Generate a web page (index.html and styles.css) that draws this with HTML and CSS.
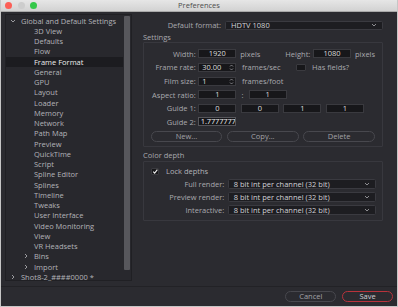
FILE: index.html
```html
<!DOCTYPE html>
<html lang="en">
<head>
    <meta charset="UTF-8">
    <meta name="viewport" content="width=device-width, initial-scale=1.0">
    <title>Preferences</title>
    <link rel="stylesheet" href="styles.css">
</head>
<body>
<div class="window">
    <div class="titlebar">
        <div class="lights">
            <span class="light red"></span>
            <span class="light gray"></span>
            <span class="light green"></span>
        </div>
        <div class="title">Preferences</div>
    </div>

    <div class="main">
        <div class="tree">
            <ul class="tree-list">
                <li class="row lvl0"><svg class="chev" viewBox="0 0 6 6"><polyline points="1,2 3,4 5,2"/></svg>Global and Default Settings</li>
                <li class="row lvl2">3D View</li>
                <li class="row lvl2">Defaults</li>
                <li class="row lvl2">Flow</li>
                <li class="row lvl2 selected">Frame Format</li>
                <li class="row lvl2">General</li>
                <li class="row lvl2">GPU</li>
                <li class="row lvl2">Layout</li>
                <li class="row lvl2">Loader</li>
                <li class="row lvl2">Memory</li>
                <li class="row lvl2">Network</li>
                <li class="row lvl2">Path Map</li>
                <li class="row lvl2">Preview</li>
                <li class="row lvl2">QuickTime</li>
                <li class="row lvl2">Script</li>
                <li class="row lvl2">Spline Editor</li>
                <li class="row lvl2">Splines</li>
                <li class="row lvl2">Timeline</li>
                <li class="row lvl2">Tweaks</li>
                <li class="row lvl2">User Interface</li>
                <li class="row lvl2">Video Monitoring</li>
                <li class="row lvl2">View</li>
                <li class="row lvl2">VR Headsets</li>
                <li class="row lvl1"><svg class="chev" viewBox="0 0 6 6"><polyline points="2,1 4,3 2,5"/></svg>Bins</li>
                <li class="row lvl1"><svg class="chev" viewBox="0 0 6 6"><polyline points="2,1 4,3 2,5"/></svg>Import</li>
                <li class="row lvl0"><svg class="chev" viewBox="0 0 6 6"><polyline points="2,1 4,3 2,5"/></svg>Shot8-2_####0000 *</li>
            </ul>
            <div class="scrollbar"><div class="thumb"></div></div>
        </div>

        <div class="panel">
            <div class="format-row">
                <span class="format-label">Default format:</span>
                <div class="select">
                    <span>HDTV 1080</span>
                    <svg class="drop" viewBox="0 0 6 4"><polyline points="1,1 3,3 5,1"/></svg>
                </div>
            </div>

            <div class="group-title">Settings</div>
            <div class="group settings">
                <div class="form-row">
                    <span class="label">Width:</span>
                    <span class="field center">1920</span>
                    <span class="unit short">pixels</span>
                    <span class="label-mid">Height:</span>
                    <span class="field center">1080</span>
                    <span class="unit">pixels</span>
                </div>
                <div class="form-row">
                    <span class="label">Frame rate:</span>
                    <span class="field spin">30.00<svg class="arrows" viewBox="0 0 5 7"><polyline points="1,2.5 2.5,1 4,2.5"/><polyline points="1,4.5 2.5,6 4,4.5"/></svg></span>
                    <span class="unit wide">frames/sec</span>
                    <span class="check"></span>
                    <span class="check-label">Has fields?</span>
                </div>
                <div class="form-row">
                    <span class="label">Film size:</span>
                    <span class="field spin">1<svg class="arrows" viewBox="0 0 5 7"><polyline points="1,2.5 2.5,1 4,2.5"/><polyline points="1,4.5 2.5,6 4,4.5"/></svg></span>
                    <span class="unit wide">frames/foot</span>
                </div>
                <div class="form-row">
                    <span class="label">Aspect ratio:</span>
                    <span class="field center">1</span>
                    <span class="colon">:</span>
                    <span class="field center">1</span>
                </div>
                <div class="form-row">
                    <span class="label">Guide 1:</span>
                    <div class="fields">
                        <span class="field center">0</span>
                        <span class="field center">0</span>
                        <span class="field center">1</span>
                        <span class="field center">1</span>
                    </div>
                </div>
                <div class="form-row">
                    <span class="label">Guide 2:</span>
                    <span class="field left active">1.7777777</span>
                </div>
                <div class="buttons">
                    <button class="pill">New...</button>
                    <button class="pill">Copy...</button>
                    <button class="pill">Delete</button>
                </div>
            </div>

            <div class="group-title">Color depth</div>
            <div class="group depth">
                <div class="lock-row">
                    <span class="check checked"><svg viewBox="0 0 8 8"><polyline points="1.5,4.2 3.2,6 6.5,1.8"/></svg></span>
                    <span>Lock depths</span>
                </div>
                <div class="depth-row">
                    <span class="depth-label">Full render:</span>
                    <div class="select">
                        <span>8 bit int per channel (32 bit)</span>
                        <svg class="drop" viewBox="0 0 6 4"><polyline points="1,1 3,3 5,1"/></svg>
                    </div>
                </div>
                <div class="depth-row">
                    <span class="depth-label">Preview render:</span>
                    <div class="select">
                        <span>8 bit int per channel (32 bit)</span>
                        <svg class="drop" viewBox="0 0 6 4"><polyline points="1,1 3,3 5,1"/></svg>
                    </div>
                </div>
                <div class="depth-row">
                    <span class="depth-label">Interactive:</span>
                    <div class="select">
                        <span>8 bit int per channel (32 bit)</span>
                        <svg class="drop" viewBox="0 0 6 4"><polyline points="1,1 3,3 5,1"/></svg>
                    </div>
                </div>
            </div>
        </div>
    </div>

    <div class="footer">
        <button class="pill action">Cancel</button>
        <button class="pill action save">Save</button>
    </div>
</div>
</body>
</html>
```

FILE: styles.css
```css
* {
    box-sizing: border-box;
}

body {
    margin: 0;
    width: 398px;
    height: 307px;
    overflow: hidden;
    font-family: "Open Sans", "Noto Sans", sans-serif;
    font-size: 7.5px;
    background: #2b2b30;
}

.window {
    height: 307px;
    display: flex;
    flex-direction: column;
    background: #2b2b30;
    border: 1px solid #c6c6c6;
    border-top: none;
}

/* title bar */
.titlebar {
    height: 12px;
    flex: none;
    position: relative;
    display: flex;
    align-items: center;
    justify-content: center;
    background: linear-gradient(#e6e6e6, #d2d2d2);
    border-bottom: 1px solid #a9a9a9;
}

.lights {
    position: absolute;
    left: 4px;
    top: 2px;
    display: flex;
    gap: 5.6px;
}

.light {
    width: 7px;
    height: 7px;
    border-radius: 50%;
}

.light.red { background: #fc5f57; }
.light.gray { background: #cdcdcd; }
.light.green { background: #34c84a; }

.title {
    color: #4d4d4d;
    font-size: 7.5px;
    line-height: 11px;
}

/* content */
.main {
    flex: 1;
    display: flex;
    min-height: 0;
}

.tree {
    width: 127px;
    height: 267px;
    margin: 2px 0 0 4px;
    border: 1px solid #202024;
    background: #28282d;
    display: flex;
}

.tree-list {
    list-style: none;
    margin: 0;
    padding: 0.6px 0 0;
    width: 117px;
}

.row {
    height: 10.25px;
    line-height: 10.25px;
    color: #b3b3b8;
    white-space: nowrap;
    display: flex;
    align-items: center;
}

.row.selected {
    background: #1c1c20;
    color: #ececec;
}

.lvl0 { padding-left: 4px; }
.lvl1 { padding-left: 17px; }
.lvl2 { padding-left: 28px; }

.chev {
    width: 6px;
    height: 6px;
    margin-right: 5px;
    fill: none;
    stroke: #a8a8ad;
    stroke-width: 0.9;
}

.scrollbar {
    flex: 1;
    padding: 1px 1px 0 1px;
}

.thumb {
    width: 6px;
    height: 254px;
    background: #57575c;
    border-radius: 1px;
}

.panel {
    flex: 1;
    padding: 8.7px 14px 0 11px;
    color: #a9a9ae;
}

.format-row {
    display: flex;
    align-items: center;
    height: 9px;
    gap: 4px;
}

.format-label {
    width: 78px;
    text-align: right;
}

.select {
    flex: 1;
    height: 100%;
    display: flex;
    align-items: center;
    justify-content: space-between;
    padding: 0 5px;
    background: #1d1d21;
    border: 1px solid #3a3a40;
    border-radius: 1.5px;
    color: #d2d2d6;
}

.drop {
    width: 6px;
    height: 4px;
    fill: none;
    stroke: #a9a9ae;
    stroke-width: 0.8;
}

.group-title {
    height: 9px;
    line-height: 9px;
    margin-top: 3.5px;
    color: #a9a9ae;
}

.group {
    border: 1px solid #38383e;
    border-radius: 1px;
}

.settings {
    display: flex;
    flex-direction: column;
    gap: 4.6px;
    padding: 6.2px 0 5px;
    height: 105px;
}

.form-row {
    display: flex;
    align-items: center;
    height: 9px;
}

.label {
    width: 51.7px;
    margin-right: 2.6px;
    text-align: right;
    white-space: nowrap;
}

.field {
    width: 38px;
    height: 9px;
    line-height: 7px;
    background: #17171a;
    border: 1px solid #3a3a3f;
    color: #dcdcdc;
    overflow: hidden;
    white-space: nowrap;
}

.field.center { text-align: center; }

.field.spin,
.field.left {
    padding-left: 3px;
    display: flex;
    align-items: center;
    justify-content: space-between;
}

.field.active {
    padding-left: 1.5px;
    letter-spacing: -0.15px;
    color: #f2f2f2;
    border-color: #55555a;
}

.arrows {
    width: 5px;
    height: 7px;
    margin-right: 1px;
    fill: none;
    stroke: #9a9a9f;
    stroke-width: 0.8;
}

.unit {
    margin-left: 4px;
    white-space: nowrap;
}

.unit.short { width: 40px; }
.unit.wide { width: 54.3px; margin-left: 5.7px; }

.label-mid {
    width: 30px;
    margin-right: 2.7px;
    text-align: right;
}

.colon {
    width: 12.3px;
    text-align: center;
}

.fields {
    display: flex;
    gap: 4.5px;
}

.check {
    width: 9.7px;
    height: 7px;
    background: #17171a;
    border: 1px solid #3a3a3f;
    border-radius: 1px;
    display: flex;
    align-items: center;
    justify-content: center;
}

.check svg {
    width: 7px;
    height: 7px;
    fill: none;
    stroke: #f2f2f2;
    stroke-width: 1.3;
}

.check-label {
    margin-left: 6px;
}

.buttons {
    display: flex;
    gap: 4.7px;
    padding: 0 7px 0 6.7px;
    margin-top: 0;
}

.pill {
    flex: 1;
    height: 11px;
    padding: 0;
    font-family: inherit;
    font-size: 7.5px;
    line-height: 9px;
    color: #a2a2a7;
    background: #2b2b30;
    border: 1px solid #48484e;
    border-radius: 6px;
}

.depth {
    height: 60px;
    margin-top: 1.8px;
    padding: 4.5px 0 0;
    display: flex;
    flex-direction: column;
}

.lock-row {
    height: 9px;
    display: flex;
    align-items: center;
    gap: 6.7px;
    padding-left: 6.7px;
    color: #b3b3b8;
}

.lock-row .check {
    width: 8.6px;
    height: 7px;
}

.depth-row {
    display: flex;
    align-items: center;
    height: 10px;
    margin-top: 3px;
}

.depth-row:first-of-type {
    margin-top: 2.8px;
}

.depth-label {
    width: 80.3px;
    margin-right: 3.4px;
    text-align: right;
}

.depth-row .select {
    flex: none;
    width: 148.3px;
}

.footer {
    height: 20px;
    flex: none;
    border-top: 1px solid #222226;
    display: flex;
    align-items: center;
    justify-content: flex-end;
    gap: 5.7px;
    padding: 0 4px 0 0;
}

.pill.action {
    flex: none;
    width: 51px;
    height: 10.4px;
    line-height: 8.4px;
    border-radius: 5.5px;
}

.pill.save {
    border-color: #b8333c;
    color: #d0d0d4;
}
```
